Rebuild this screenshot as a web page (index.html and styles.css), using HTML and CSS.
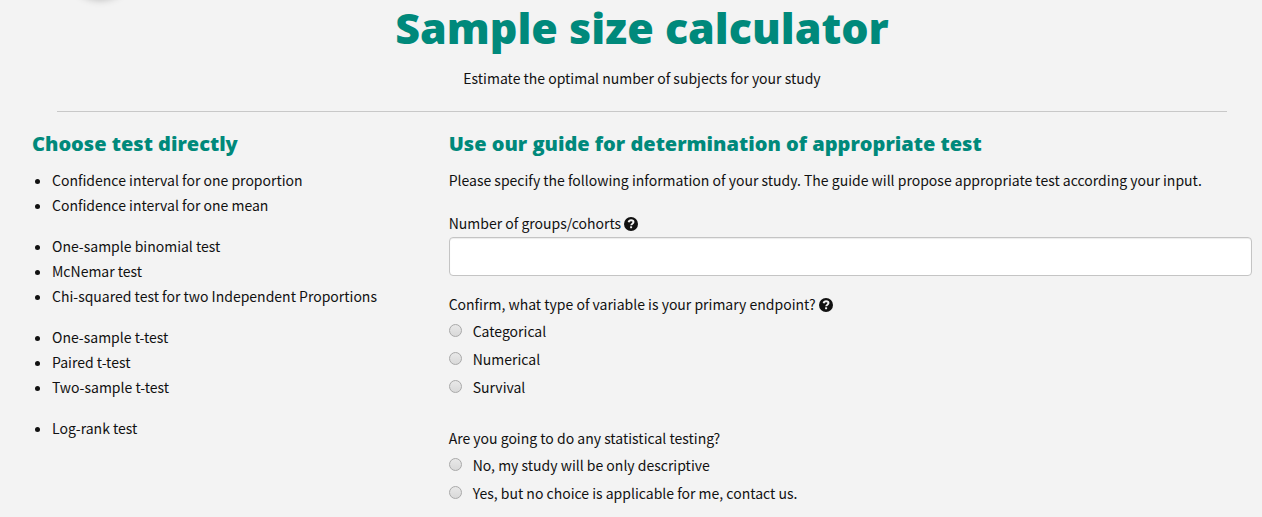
FILE: index.html
```html
<!DOCTYPE html>
<html lang="en">
    <head>
        <meta charset="utf-8">
        <meta name="viewport" content="width=device-width, initial-scale=1">
        <title>Sample size calculator</title>
        <link rel="stylesheet" href="styles.css">
    </head>
    <body>
        <div class="knob"></div>
        <header class="header">
            <h1>Sample size calculator</h1>
            <p>Estimate the optimal number of subjects for your study</p>
        </header>
        <main class="content">
            <section class="tests">
                <h2>Choose test directly</h2>
                <ul>
                    <li><a href="#proportion">Confidence interval for one proportion</a></li>
                    <li><a href="#mean">Confidence interval for one mean</a></li>
                </ul>
                <ul>
                    <li><a href="#binomial">One-sample binomial test</a></li>
                    <li><a href="#mcnemar">McNemar test</a></li>
                    <li><a href="#chi-squared">Chi-squared test for two Independent Proportions</a></li>
                </ul>
                <ul>
                    <li><a href="#one-sample">One-sample t-test</a></li>
                    <li><a href="#paired">Paired t-test</a></li>
                    <li><a href="#two-sample">Two-sample t-test</a></li>
                </ul>
                <ul>
                    <li><a href="#log-rank">Log-rank test</a></li>
                </ul>
            </section>
            <section class="guide">
                <h2>Use our guide for determination of appropriate test</h2>
                <p>Please specify the following information of your study. The guide will propose appropriate test according your input.</p>
                <form>
                    <div class="group">
                        <label for="groups">Number of groups/cohorts</label>
                        <svg class="help" viewBox="0 0 14 14" aria-hidden="true">
                            <circle cx="7" cy="7" r="7" fill="#111"/>
                            <path d="M4.6 5.3C4.9 3.9 5.8 3.2 7.1 3.2c1.4 0 2.4.8 2.4 1.9 0 1.6-2.3 1.6-2.3 3.2" fill="none" stroke="#f3f3f3" stroke-width="1.9"/>
                            <path d="M6.1 9.3h2v1.9h-2z" fill="#f3f3f3"/>
                        </svg>
                        <input class="text" type="text" id="groups" name="groups">
                    </div>
                    <fieldset>
                        <legend>Confirm, what type of variable is your primary endpoint?
                            <svg class="help" viewBox="0 0 14 14" aria-hidden="true">
                                <circle cx="7" cy="7" r="7" fill="#111"/>
                                <path d="M4.6 5.3C4.9 3.9 5.8 3.2 7.1 3.2c1.4 0 2.4.8 2.4 1.9 0 1.6-2.3 1.6-2.3 3.2" fill="none" stroke="#f3f3f3" stroke-width="1.9"/>
                                <path d="M6.1 9.3h2v1.9h-2z" fill="#f3f3f3"/>
                            </svg>
                        </legend>
                        <label class="option"><input type="radio" name="endpoint" value="categorical">Categorical</label>
                        <label class="option"><input type="radio" name="endpoint" value="numerical">Numerical</label>
                        <label class="option"><input type="radio" name="endpoint" value="survival">Survival</label>
                    </fieldset>
                    <fieldset>
                        <legend>Are you going to do any statistical testing?</legend>
                        <label class="option"><input type="radio" name="testing" value="no">No, my study will be only descriptive</label>
                        <label class="option"><input type="radio" name="testing" value="yes">Yes, but no choice is applicable for me, contact us.</label>
                    </fieldset>
                </form>
            </section>
        </main>
    </body>
</html>
```

FILE: styles.css
```css
* {
    box-sizing: border-box;
}
body {
    margin: 0;
    background: #f3f3f3;
    color: #111;
    font-family: "Noto Sans CJK SC", "Noto Sans", sans-serif;
    font-size: 14px;
    line-height: 25px;
}
h1, h2 {
    margin: 0;
    color: #00897b;
    font-family: "Open Sans", sans-serif;
    font-weight: 800;
}
h1 {
    font-size: 43px;
    line-height: 56px;
}
h2 {
    margin-bottom: 8px;
    font-size: 20px;
    line-height: 32px;
}
p {
    margin: 0;
}
a {
    color: inherit;
    text-decoration: none;
}
.knob {
    position: absolute;
    top: -63px;
    left: 70px;
    width: 60px;
    height: 60px;
    border-radius: 50%;
    box-shadow: 0 0 8px 2px rgba(0, 0, 0, 0.3);
}
.header {
    margin: 0 35px 0 57px;
    padding-bottom: 20px;
    border-bottom: 1px solid #c8c8c8;
    text-align: center;
}
.header h1 {
    margin-bottom: 10px;
}
.content {
    display: grid;
    grid-template-columns: calc(33.333% - 20px) 1fr;
    column-gap: 30px;
    padding: 16px 10px 0 32px;
}
ul {
    margin: 0 0 16px;
    padding-left: 20px;
}
.guide p {
    margin-bottom: 18px;
}
.group {
    margin-bottom: 16px;
}
.help {
    width: 14px;
    height: 14px;
    vertical-align: -2px;
}
.text {
    display: block;
    width: 100%;
    height: 39px;
    margin-top: 1px;
    padding: 6px 12px;
    border: 1px solid #c4c4c4;
    border-radius: 4px;
    background: #fff;
    box-shadow: inset 0 1px 1px rgba(0, 0, 0, 0.08);
    font: inherit;
}
fieldset {
    margin: 0 0 25px;
    padding: 0;
    border: 0;
}
fieldset:last-child {
    margin-bottom: 0;
}
legend {
    padding: 0;
}
.option {
    display: flex;
    align-items: center;
    gap: 11px;
    line-height: 28px;
}
.option input {
    appearance: none;
    width: 13px;
    height: 13px;
    margin: 0 0 2px;
    border: 1px solid #a9a9a9;
    border-radius: 50%;
    background: linear-gradient(#e8e8e8, #d9d9d9);
}
.option input:checked {
    background: radial-gradient(#444 35%, #e0e0e0 40%);
}
```
